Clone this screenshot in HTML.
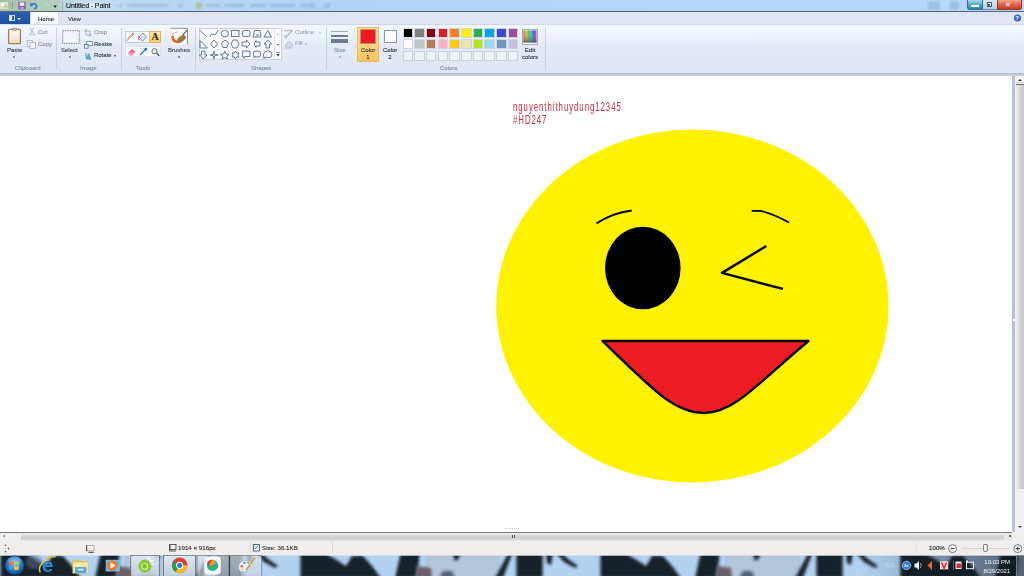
<!DOCTYPE html>
<html><head><meta charset="utf-8">
<style>
*{margin:0;padding:0;box-sizing:border-box}
html,body{width:1024px;height:576px;overflow:hidden;background:#fff;font-family:"Liberation Sans",sans-serif}
.a{position:absolute}
#title{left:0;top:0;width:1024px;height:11px;background:linear-gradient(90deg,#a6c2a4 0,#b4cfc0 55px,#bcd8f2 120px,#b0d4f6 300px,#b4d8fa 700px,#b4d8fa 1024px)}
#titleline{left:0;top:10.8px;width:1024px;height:1.2px;background:#56667c}
#tabs{left:0;top:12px;width:1024px;height:12px;background:#dfe6f2}
#file{left:0;top:12px;width:30px;height:12px;background:linear-gradient(#2c5fb0,#1e4f9e)}
#home{left:30px;top:12px;width:28.5px;height:13px;background:linear-gradient(#fdfeff,#f4f8fd);border-left:1px solid #c4dcf0;border-right:1px solid #d4dee8}
#view{left:59px;top:12.5px;width:34px;height:11.5px;background:#e4e9f3;border:1px solid #eef2f8;border-bottom:none}
#ribbon{left:0;top:24px;width:1024px;height:49px;background:linear-gradient(#f2f8ff 0,#eef4fc 8px,#e3eaf5 22px,#dfe6f2 49px);border-top:1px solid #cfd8e4}
#ribbonbot{left:0;top:72.5px;width:1024px;height:3.2px;background:linear-gradient(#b4c0d0 0,#b8c4d4 40%,#c6cedb 55%,#ccd4e0 100%)}
.t{position:absolute;font-size:6px;line-height:7px;color:#2a3a50;white-space:nowrap;will-change:transform;-webkit-text-stroke:0.12px currentColor}
.g{color:#8090a4}
.sep{position:absolute;top:28px;width:1px;height:42px;background:#c7d3e2}
#canvas{left:0;top:76px;width:1012px;height:456px;background:#fff}
#vstrip{left:1012px;top:76px;width:3px;height:456px;background:#b4c4d6}
#vscroll{left:1015px;top:76px;width:9px;height:464px;background:#f0f0f0}
#hscroll{left:0;top:532px;width:1012px;height:8px;background:#e6e6e6;border-top:1px solid #7c7c7c}
#status{left:0;top:540px;width:1024px;height:15px;background:#f0eeec}
#taskbar{left:0;top:555px;width:1024px;height:21px;background:#a9c9ea;overflow:hidden}
</style></head><body>
<div id="title" class="a"></div>
<div id="titleline" class="a"></div><svg class="a" style="left:0;top:0" width="1024" height="11" viewBox="0 0 1024 11"><defs><filter id="tb" x="-10%" y="-100%" width="120%" height="300%"><feGaussianBlur stdDeviation="1.1"/></filter></defs>
<g filter="url(#tb)" fill="#5a7088" opacity="0.22">
<rect x="112" y="4" width="10" height="3"/><rect x="128" y="4" width="40" height="3"/><rect x="178" y="4" width="5" height="3"/>
<rect x="206" y="4" width="14" height="3"/><rect x="224" y="4" width="20" height="3"/><rect x="250" y="4" width="16" height="3"/><rect x="270" y="4" width="25" height="3"/><rect x="300" y="4" width="15" height="3"/>
<rect x="309" y="3" width="6" height="5"/><rect x="324" y="3" width="6" height="5"/>
<rect x="928" y="1" width="12" height="9"/><rect x="950" y="1" width="9" height="9"/>
</g>
<g filter="url(#tb)"><rect x="196" y="2.5" width="6" height="6" fill="#a8b870" opacity="0.7"/></g>
</svg>
<svg class="a" style="left:0;top:0" width="60" height="11" viewBox="0 0 60 11">
<rect x="0" y="2" width="8" height="7" fill="#e8f0e0" opacity="0.7"/><rect x="1" y="3" width="3" height="3" fill="#f8f8f0"/><rect x="4.5" y="5" width="3" height="3" fill="#d8c890"/>
<rect x="12" y="2" width="0.8" height="7" fill="#8a9aa0"/>
<rect x="18.2" y="1.8" width="7.6" height="7.6" fill="#8a64b8"/><rect x="19.8" y="2.5" width="4.4" height="3.3" fill="#f4eef8"/><rect x="20.5" y="7" width="3" height="2" fill="#b8a0d0"/>
<path d="M31,4.5 Q35,2.5 36.5,5.5 Q37,8.5 34,8.8" stroke="#2a78c8" stroke-width="1.6" fill="none"/><path d="M30,3 L30.5,6.8 L33.5,5 Z" fill="#2a78c8"/>
<path d="M48.5,5 Q45,2.5 42.5,5.5" stroke="#c4d2cc" stroke-width="1.4" fill="none"/><path d="M49.5,3.5 L49,6.5 L46.5,5.5 Z" fill="#c4d2cc"/>
<path d="M53.2,5.6 L56.8,5.6 L55,7.9 Z" fill="#1a2430"/>
</svg>
<div class="a" style="left:967px;top:0;width:16px;height:10px;border-radius:0 0 0 3px;background:linear-gradient(#a8d8f0,#4aa0c8 60%,#2a88b8);border:1px solid #3a6a8a;border-top:none"></div>
<div class="a" style="left:971px;top:5px;width:8px;height:1.8px;background:#fff"></div>
<div class="a" style="left:983px;top:0;width:14px;height:10px;background:linear-gradient(#d8e8f4,#b8d0e4);border-bottom:1px solid #6a8aa4"></div>
<div class="a" style="left:986.5px;top:2px;width:5px;height:5px;border:1px solid #4a5a6a;background:#f0f4f8"></div>
<div class="a" style="left:988px;top:3.5px;width:2px;height:2px;background:#4a5a6a"></div>
<div class="a" style="left:997px;top:0;width:25px;height:10px;border-radius:0 0 3px 0;background:linear-gradient(#f4a890,#e06048 50%,#c83a24);border:1px solid #8a3a2a;border-top:none"></div>
<div class="a" style="left:1005.5px;top:1px;font-size:8px;line-height:8px;font-weight:bold;color:#fff">×</div>

<div class="a" style="left:60px;top:0;width:60px;height:11px;background:radial-gradient(ellipse at center,rgba(230,242,252,0.9) 0,rgba(200,225,248,0.5) 60%,rgba(180,210,240,0) 100%)"></div><div class="a" style="left:62px;top:2px;width:1px;height:8px;background:#9aacbf"></div><div class="t" style="left:66px;top:1.5px;font-size:7px;line-height:8px;color:#10151c;-webkit-text-stroke:0.15px #10151c;letter-spacing:-0.1px">Untitled - Paint</div>
<div id="tabs" class="a"></div>
<div id="file" class="a"></div>
<div class="a" style="left:9px;top:15px;width:6px;height:6px;background:#fff;border:1px solid #c8d8f0"></div><div class="a" style="left:12px;top:16px;width:1.5px;height:4px;background:#2a5aa0"></div><div class="a" style="left:17px;top:17.5px;border-left:2.5px solid transparent;border-right:2.5px solid transparent;border-top:2.5px solid #fff"></div>
<svg class="a" style="left:1013px;top:14px" width="9" height="8" viewBox="0 0 9 8"><circle cx="4.5" cy="4" r="3.6" fill="#3a6ac8"/><text x="2.6" y="6.2" font-family="Liberation Sans" font-size="5.5" font-weight="bold" fill="#fff">?</text></svg><div id="home" class="a"></div>
<div class="t" style="left:37.7px;top:15.8px;color:#1e2632">Home</div>
<div class="t" style="left:68.4px;top:15.8px;color:#2a3440">View</div>
<div id="ribbon" class="a"></div>
<div id="ribbonbot" class="a"></div>

<!-- clipboard -->
<svg class="a" style="left:7px;top:27px" width="16" height="19" viewBox="0 0 16 19">
<defs><linearGradient id="pg" x1="0" y1="0" x2="0" y2="1"><stop offset="0" stop-color="#fdfbf8"/><stop offset="0.6" stop-color="#f4ece0"/><stop offset="1" stop-color="#e6d8c4"/></linearGradient></defs>
<rect x="1.6" y="2.4" width="11.8" height="14.2" rx="0.8" fill="url(#pg)" stroke="#a4804c" stroke-width="1.3"/>
<rect x="5.6" y="1" width="3.8" height="2.6" rx="0.5" fill="#c4bcb0" stroke="#8a7e70" stroke-width="0.5"/>
</svg>
<div class="t" style="left:7px;top:47px;color:#3c4652">Paste</div>
<div class="a" style="left:13px;top:56px;width:2px;height:2px;background:#8090a0"></div>
<svg class="a" style="left:28.5px;top:28.3px" width="6" height="8" viewBox="0 0 6 8"><path d="M1.2,0 L4.2,5.2 M4.8,0 L1.8,5.2" stroke="#a8b0ba" stroke-width="0.9"/><circle cx="1.4" cy="6.4" r="1.1" fill="#b8c0c8"/><circle cx="4.6" cy="6.4" r="1.1" fill="#b8c0c8"/></svg>
<div class="t g" style="left:38px;top:29px">Cut</div>
<svg class="a" style="left:27px;top:40px" width="9" height="9" viewBox="0 0 9 9"><rect x="0.5" y="0.5" width="5" height="6" fill="#f2f4f7" stroke="#aab2bc" stroke-width="0.8"/><rect x="3" y="2.5" width="5.5" height="6" fill="#f2f4f7" stroke="#aab2bc" stroke-width="0.8"/></svg>
<div class="t g" style="left:38px;top:41px">Copy</div>
<div class="t g" style="left:15px;top:65.2px">Clipboard</div>
<div class="sep" style="left:56px"></div>
<!-- image -->
<svg class="a" style="left:61.5px;top:29.5px" width="18" height="14" viewBox="0 0 18 14"><rect x="0.7" y="0.7" width="16.6" height="12.6" fill="#f0f4f9" stroke="#6a7480" stroke-width="0.9" stroke-dasharray="1.4,1"/></svg>
<div class="t" style="left:61px;top:47px;color:#3c4652">Select</div>
<div class="a" style="left:69px;top:56px;width:2px;height:2px;background:#8090a0"></div>
<svg class="a" style="left:84px;top:29px" width="8" height="8" viewBox="0 0 8 8"><path d="M2,0 V6 H8 M0,2 H6 V8" stroke="#a0a8b4" stroke-width="0.9" fill="none"/></svg>
<div class="t g" style="left:94px;top:29px">Crop</div>
<svg class="a" style="left:83.5px;top:40.5px" width="9" height="8" viewBox="0 0 9 8"><rect x="2.8" y="0.5" width="5.6" height="4.2" fill="#fff" stroke="#3a6cb0" stroke-width="0.7"/><rect x="0.5" y="3.6" width="3.6" height="3.6" fill="#e8f0fa" stroke="#3a6cb0" stroke-width="0.7"/></svg>
<div class="t" style="left:94px;top:41px;color:#2c3a4c">Resize</div>
<svg class="a" style="left:84px;top:52px" width="8" height="8" viewBox="0 0 8 8"><path d="M1,1 L5,1 L7.5,7.5 L2,7.5 Z" fill="#5aa0c8"/><path d="M1,1 L5,1 L3,5 Z" fill="#a8d0e8"/></svg>
<div class="t" style="left:94px;top:52px;color:#2c3a4c">Rotate</div>
<div class="a" style="left:113.5px;top:55px;border-left:1.5px solid transparent;border-right:1.5px solid transparent;border-top:2px solid #505a66"></div>
<div class="t g" style="left:80px;top:65.2px">Image</div>
<div class="sep" style="left:121px"></div>
<!-- tools -->
<div class="a" style="left:124.5px;top:31px;width:36px;height:12px;border:1px solid #c3ccd8;background:#f4f7fb"></div>
<div class="a" style="left:124.5px;top:46px;width:36px;height:11px;border:1px solid #dde4ee;background:#f4f7fb"></div>
<div class="a" style="left:149px;top:31px;width:11.5px;height:12px;border:1px solid #e4b458;background:linear-gradient(#fce7a8,#f7c966)"></div>
<svg class="a" style="left:126px;top:32px" width="9" height="10" viewBox="0 0 9 10"><path d="M1,9 L2,6 L7,1 L8,2 L3,7 Z" fill="#e8b878" stroke="#c89050" stroke-width="0.5"/><path d="M6,2 L7,1 L8,2 L7,3 Z" fill="#707880"/></svg>
<svg class="a" style="left:138px;top:32px" width="9" height="10" viewBox="0 0 9 10"><path d="M1,5 L5,1 L8.5,5 L4.5,9 Z" fill="#d8e6f2" stroke="#6c8cb0" stroke-width="0.9"/><path d="M0.5,4 Q0,7 1.5,8" stroke="#e07880" stroke-width="1.2" fill="none"/></svg>
<div class="a" style="left:151.5px;top:30.5px;font-family:'Liberation Serif',serif;font-weight:bold;font-size:10px;line-height:12px;color:#1a1a1a">A</div>
<svg class="a" style="left:127px;top:48px" width="9" height="8" viewBox="0 0 9 8"><path d="M0.5,5.5 L5,1 L8.5,3.5 L4,8 Z" fill="#e8707a"/><path d="M0.5,5.5 L2.5,3.5 L6,6 L4,8 Z" fill="#f4a0a8"/></svg>
<svg class="a" style="left:139px;top:47px" width="9" height="9" viewBox="0 0 9 9"><path d="M1,8 L6,3" stroke="#3070b8" stroke-width="1.2"/><path d="M5,2 L7,0.5 L8.5,2 L7,4 Z" fill="#2060a8"/></svg>
<svg class="a" style="left:151px;top:48px" width="9" height="8" viewBox="0 0 9 8"><circle cx="3.5" cy="3.2" r="2.6" fill="#e8f0f8" stroke="#5a6878" stroke-width="0.9"/><path d="M5.5,5.2 L8.3,7.8" stroke="#404850" stroke-width="1.4"/></svg>
<div class="t g" style="left:136px;top:65.2px">Tools</div>
<div class="sep" style="left:165px;background:#dfe6ef"></div>
<!-- brushes -->
<svg class="a" style="left:169px;top:27px" width="21" height="20" viewBox="169 27 21 20">
<rect x="170.5" y="28.3" width="17" height="16.8" fill="#fbfcfe"/>
<path d="M170.5,28.3 H187.5 V45" stroke="#8a929c" stroke-width="1" fill="none"/>
<path d="M170.5,45 H187.5 M170.5,28.3 V45" stroke="#dfe4ea" stroke-width="0.7" fill="none"/>
<path d="M171.5,36 Q171,41 174.5,42.6 Q178,44 181.5,42 L181,40 Q177,41.5 175,39.5 Q173.5,38 174,35.5 Z" fill="#e8602a"/>
<path d="M171.8,35 Q174,32.5 177.5,32" stroke="#e07040" stroke-width="1" fill="none" stroke-dasharray="1.2,0.6"/>
<ellipse cx="181.5" cy="38.8" rx="4.8" ry="2.8" transform="rotate(-38 181.5 38.8)" fill="#9a7a38"/>
<path d="M182.8,35.2 L187,30.2" stroke="#4a5a80" stroke-width="1.1"/>
</svg>
<div class="t" style="left:168px;top:47px;color:#3c4652">Brushes</div>
<div class="a" style="left:178px;top:56px;width:2px;height:2px;background:#8090a0"></div>
<div class="sep" style="left:194.5px"></div>
<!-- shapes -->
<div class="a" style="left:198.5px;top:28px;width:83px;height:32px;border:1px solid #c8d0dc;background:#f7f9fc"></div>
<div class="a" style="left:273.5px;top:29px;width:1px;height:30px;background:#e2e7ee"></div>
<svg class="a" style="left:199px;top:29px" width="74" height="31" viewBox="0 0 74 31" fill="none" stroke="#42607e" stroke-width="0.8">
<path d="M0.5,1 L8,8"/>
<path d="M11,8 Q12,4 14,5 Q15,7 17,5 Q18,3 19,1"/>
<ellipse cx="25.8" cy="4.6" rx="3.8" ry="3.3" fill="#f0f6fb"/>
<rect x="32.5" y="1.5" width="7.5" height="6" fill="#f0f6fb"/>
<rect x="43.5" y="1.5" width="7.5" height="6" rx="1.5" fill="#f0f6fb"/>
<path d="M54,8 L55.5,1.5 L61,1.5 L62,8 Z M57,6 L60,6" fill="#f0f6fb"/>
<path d="M65,8 L68.8,1.5 L72.5,8 Z" fill="#f0f6fb"/>
<path d="M1,11.5 L1,19 L8.5,19 Z" fill="#f0f6fb"/>
<path d="M15,11 L18.5,15 L15,19 L11.5,15 Z" fill="#f0f6fb"/>
<path d="M26,11 L29.5,14 L28,18.5 L24,18.5 L22.5,14 Z" fill="#f0f6fb"/>
<path d="M34,11 L38,11 L40,15 L38,19 L34,19 L32,15 Z" fill="#f0f6fb"/>
<path d="M43,13 L47.5,13 L47.5,11 L51,15 L47.5,19 L47.5,17 L43,17 Z" fill="#f0f6fb"/>
<path d="M55,15 L57,11.5 L57,13 L61,13 L61,17 L57,17 L57,18.5 Z" fill="#f0f6fb"/>
<path d="M68.8,11 L72.5,15 L70.5,15 L70.5,19 L67,19 L67,15 L65,15 Z" fill="#f0f6fb"/>
<path d="M2.5,22 L6,22 L6,26 L8,26 L4.2,30 L0.5,26 L2.5,26 Z" fill="#f0f6fb"/>
<path d="M15,22 L15.7,25.3 L19,26 L15.7,26.7 L15,30 L14.3,26.7 L11,26 L14.3,25.3 Z" fill="#f0f6fb"/>
<path d="M25.8,22 L27,25 L30,25.3 L27.8,27.3 L28.5,30 L25.8,28.5 L23,30 L23.8,27.3 L21.5,25.3 L24.6,25 Z" fill="#f0f6fb"/>
<path d="M36.5,22 L37.8,24 L40,24 L39,26 L40,28 L37.8,28 L36.5,30 L35.2,28 L33,28 L34,26 L33,24 L35.2,24 Z" fill="#f0f6fb"/>
<path d="M43.5,22 L51,22 L51,27.5 L46,27.5 L45,29.5 L44.5,27.5 L43.5,27.5 Z" fill="#f0f6fb"/>
<path d="M55,22.5 Q58,21.5 61,22.5 Q62.5,25 61,27.5 Q58,28.5 56,27.5 L55,29 L55,27 Q53.5,25 55,22.5 Z" fill="#f0f6fb"/>
<path d="M65.5,23 Q68.8,20.5 72,23 Q74,25.5 72,28 Q68.8,29.5 66,28 L65,29.5 Q63.5,25.5 65.5,23 Z" fill="#f0f6fb"/>
</svg>
<svg class="a" style="left:275px;top:30px" width="6" height="29" viewBox="0 0 6 29"><path d="M1.5,5 L4.5,5 L3,3.5 Z" fill="#b8c0cc"/><path d="M1.5,14 L4.5,14 L3,15.5 Z" fill="#606a78"/><path d="M1,24 L5,24 L3,26.5 Z" fill="#404a58"/><path d="M1,22.5 L5,22.5" stroke="#404a58" stroke-width="0.6"/></svg>
<svg class="a" style="left:284px;top:29px" width="10" height="10" viewBox="0 0 10 10"><path d="M1,9 L8,2" stroke="#b0b8c4" stroke-width="1.4"/><path d="M0.5,1.5 L9,1.5" stroke="#b0b8c4" stroke-width="1.2"/><path d="M1,6 L1,9" stroke="#b0b8c4" stroke-width="1"/></svg>
<div class="t g" style="left:295px;top:29px;color:#9aa6b4">Outline</div>
<div class="a" style="left:318.5px;top:31.5px;border-left:1.5px solid transparent;border-right:1.5px solid transparent;border-top:2px solid #a8b2be"></div>
<svg class="a" style="left:284px;top:39px" width="10" height="10" viewBox="0 0 10 10"><path d="M1,7 L5,2 L9,6 L5,9 Z" fill="#d0d8e2" stroke="#b0b8c4" stroke-width="0.8"/><path d="M1,9 L9,9" stroke="#c4ccd6" stroke-width="1.2"/></svg>
<div class="t g" style="left:295px;top:40px;color:#9aa6b4">Fill</div>
<div class="a" style="left:305px;top:43px;border-left:1.5px solid transparent;border-right:1.5px solid transparent;border-top:2px solid #a8b2be"></div>
<div class="t g" style="left:251px;top:65.2px">Shapes</div>
<div class="sep" style="left:325.5px"></div>
<!-- size -->
<div class="a" style="left:331px;top:31px;width:17px;height:1.3px;background:#a4acbc"></div>
<div class="a" style="left:331px;top:35px;width:17px;height:2px;background:#6a7898"></div>
<div class="a" style="left:331px;top:39.2px;width:17px;height:3.5px;background:#6c7a96"></div>
<div class="t g" style="left:334px;top:47px">Size</div>
<div class="a" style="left:338.5px;top:56px;width:2px;height:2px;background:#b0bac6"></div>
<div class="sep" style="left:354px;background:#e2e8f0"></div>
<!-- colors -->
<div class="a" style="left:357px;top:26.5px;width:22px;height:35px;border:1px solid #e8b860;background:linear-gradient(#fde6a6,#fbc460)"></div>
<div class="a" style="left:360px;top:28.5px;width:16px;height:15px;background:#ed1c24;border:1px solid #c88a6a"></div>
<div class="t" style="left:361px;top:47px;color:#2a3440;text-align:center;width:14px;line-height:6.5px">Color<br>1</div>
<div class="a" style="left:384px;top:30px;width:13px;height:13px;background:#fff;border:1px solid #8a96a4"></div>
<div class="t" style="left:383px;top:47px;color:#2a3440;text-align:center;width:14px;line-height:6.5px">Color<br>2</div>
<div id="pal" class="a" style="left:402px;top:27px;width:118px;height:35px"><div class="a" style="left:0.5px;top:0.5px;width:10.5px;height:10px;border:1px solid #d0d6de;background:#000000"></div><div class="a" style="left:12.2px;top:0.5px;width:10.5px;height:10px;border:1px solid #d0d6de;background:#7f7f7f"></div><div class="a" style="left:23.9px;top:0.5px;width:10.5px;height:10px;border:1px solid #d0d6de;background:#880015"></div><div class="a" style="left:35.6px;top:0.5px;width:10.5px;height:10px;border:1px solid #d0d6de;background:#ed1c24"></div><div class="a" style="left:47.3px;top:0.5px;width:10.5px;height:10px;border:1px solid #d0d6de;background:#ff7f27"></div><div class="a" style="left:59.0px;top:0.5px;width:10.5px;height:10px;border:1px solid #d0d6de;background:#fff200"></div><div class="a" style="left:70.7px;top:0.5px;width:10.5px;height:10px;border:1px solid #d0d6de;background:#22b14c"></div><div class="a" style="left:82.4px;top:0.5px;width:10.5px;height:10px;border:1px solid #d0d6de;background:#00a2e8"></div><div class="a" style="left:94.1px;top:0.5px;width:10.5px;height:10px;border:1px solid #d0d6de;background:#3f48cc"></div><div class="a" style="left:105.8px;top:0.5px;width:10.5px;height:10px;border:1px solid #d0d6de;background:#a349a4"></div><div class="a" style="left:0.5px;top:12.1px;width:10.5px;height:10px;border:1px solid #d0d6de;background:#ffffff"></div><div class="a" style="left:12.2px;top:12.1px;width:10.5px;height:10px;border:1px solid #d0d6de;background:#c3c3c3"></div><div class="a" style="left:23.9px;top:12.1px;width:10.5px;height:10px;border:1px solid #d0d6de;background:#b97a57"></div><div class="a" style="left:35.6px;top:12.1px;width:10.5px;height:10px;border:1px solid #d0d6de;background:#ffaec9"></div><div class="a" style="left:47.3px;top:12.1px;width:10.5px;height:10px;border:1px solid #d0d6de;background:#ffc90e"></div><div class="a" style="left:59.0px;top:12.1px;width:10.5px;height:10px;border:1px solid #d0d6de;background:#efe4b0"></div><div class="a" style="left:70.7px;top:12.1px;width:10.5px;height:10px;border:1px solid #d0d6de;background:#b5e61d"></div><div class="a" style="left:82.4px;top:12.1px;width:10.5px;height:10px;border:1px solid #d0d6de;background:#99d9ea"></div><div class="a" style="left:94.1px;top:12.1px;width:10.5px;height:10px;border:1px solid #d0d6de;background:#7092be"></div><div class="a" style="left:105.8px;top:12.1px;width:10.5px;height:10px;border:1px solid #d0d6de;background:#c8bfe7"></div><div class="a" style="left:0.5px;top:23.7px;width:10.5px;height:10px;border:1px solid #c8d0dc;background:#eef2f7"></div><div class="a" style="left:12.2px;top:23.7px;width:10.5px;height:10px;border:1px solid #c8d0dc;background:#eef2f7"></div><div class="a" style="left:23.9px;top:23.7px;width:10.5px;height:10px;border:1px solid #c8d0dc;background:#eef2f7"></div><div class="a" style="left:35.6px;top:23.7px;width:10.5px;height:10px;border:1px solid #c8d0dc;background:#eef2f7"></div><div class="a" style="left:47.3px;top:23.7px;width:10.5px;height:10px;border:1px solid #c8d0dc;background:#eef2f7"></div><div class="a" style="left:59.0px;top:23.7px;width:10.5px;height:10px;border:1px solid #c8d0dc;background:#eef2f7"></div><div class="a" style="left:70.7px;top:23.7px;width:10.5px;height:10px;border:1px solid #c8d0dc;background:#eef2f7"></div><div class="a" style="left:82.4px;top:23.7px;width:10.5px;height:10px;border:1px solid #c8d0dc;background:#eef2f7"></div><div class="a" style="left:94.1px;top:23.7px;width:10.5px;height:10px;border:1px solid #c8d0dc;background:#eef2f7"></div><div class="a" style="left:105.8px;top:23.7px;width:10.5px;height:10px;border:1px solid #c8d0dc;background:#eef2f7"></div></div>
<svg class="a" style="left:522px;top:29px" width="16" height="16" viewBox="0 0 16 16">
<defs><linearGradient id="rb" x1="0" y1="0" x2="1" y2="0"><stop offset="0" stop-color="#e03020"/><stop offset="0.2" stop-color="#e8d020"/><stop offset="0.4" stop-color="#30c040"/><stop offset="0.6" stop-color="#20c0d0"/><stop offset="0.8" stop-color="#3040d0"/><stop offset="1" stop-color="#d030c0"/></linearGradient>
<linearGradient id="rbv" x1="0" y1="0" x2="0" y2="1"><stop offset="0" stop-color="#fff" stop-opacity="0"/><stop offset="1" stop-color="#505050" stop-opacity="0.8"/></linearGradient></defs>
<rect x="0.5" y="0.5" width="15" height="15" fill="#fff" stroke="#a0a8b4" stroke-width="1"/>
<rect x="1.5" y="1.5" width="13" height="12" fill="url(#rb)"/>
<rect x="1.5" y="1.5" width="13" height="12" fill="url(#rbv)"/>
</svg>
<div class="t" style="left:520px;top:47px;color:#2a3440;text-align:center;width:20px;line-height:6.5px">Edit<br>colors</div>
<div class="t g" style="left:440px;top:65.2px">Colors</div>
<div class="sep" style="left:544.5px"></div>
<div id="canvas" class="a"></div>
<svg class="a" style="left:0;top:0" width="1024" height="576" viewBox="0 0 1024 576">
<ellipse cx="692.4" cy="306" rx="196.1" ry="176.5" fill="#fff200"/>
<ellipse cx="642.8" cy="268" rx="37.8" ry="41.3" fill="#000"/>
<path d="M596.5,223.5 Q612,213 631.7,210.5" stroke="#000" stroke-width="1.8" fill="none"/>
<path d="M751.7,210.8 L761,210.8 Q776,215 789,222.6" stroke="#000" stroke-width="1.8" fill="none"/>
<path d="M766.4,246 L722,272.9 L782.9,288.9" stroke="#000" stroke-width="2.4" fill="none" stroke-linejoin="round"/>
<path d="M602.5,341 L808.5,341 C760,381 735,413 704,413 C675,413 655,392 602.5,341 Z" fill="#ed1c24" stroke="#000" stroke-width="2.4" stroke-linejoin="round"/>
</svg>
<div class="a" style="left:513px;top:100px;font-size:13px;line-height:13px;color:#d02a3c;transform-origin:0 0;transform:scaleX(0.6);letter-spacing:1.6px;white-space:nowrap">nguyenthithuydung12345<br>#HD247</div>
<div id="vstrip" class="a"></div>
<div id="vscroll" class="a"></div>
<div id="hscroll" class="a"></div>
<div id="status" class="a"></div><div class="a" style="left:1012px;top:532px;width:12px;height:9px;background:#efefef"></div>

<div class="a" style="left:0;top:533px;width:21px;height:8px;background:#efefef"></div>
<div class="a" style="left:21px;top:533px;width:983px;height:8px;background:linear-gradient(#f0f0f0 0,#dcdcdc 30%,#cdcdcd 60%,#e4e4e4 100%)"></div>
<div class="a" style="left:3px;top:535px;border-top:1.5px solid transparent;border-bottom:1.5px solid transparent;border-right:2px solid #555"></div>
<div class="a" style="left:1009px;top:535px;width:2px;height:2px;background:#666"></div><div class="a" style="left:1017.5px;top:284px;width:4px;height:0.8px;background:#555"></div><div class="a" style="left:1017.5px;top:286.2px;width:4px;height:0.8px;background:#777"></div><div class="a" style="left:1012.5px;top:319px;width:2px;height:2px;background:#fff"></div><div class="a" style="left:511.5px;top:534.5px;width:1px;height:3.5px;background:#555"></div><div class="a" style="left:513.5px;top:534.5px;width:1px;height:3.5px;background:#555"></div><div class="a" style="left:505px;top:528px;width:14px;height:1px;border-top:1px dotted #c8c8c8"></div>
<div class="a" style="left:1015px;top:76px;width:9px;height:7px;background:#f4f4f4;border-bottom:1px solid #cfcfcf"></div>
<div class="a" style="left:1017.5px;top:78.5px;border-left:2px solid transparent;border-right:2px solid transparent;border-bottom:2px solid #333"></div>
<div class="a" style="left:1016px;top:83.5px;width:8px;height:405.5px;background:linear-gradient(90deg,#ececec,#d0d0d0 60%,#c8c8c8);border-top:1px solid #6a6a6a"></div>
<div class="a" style="left:1017.5px;top:526px;border-left:2px solid transparent;border-right:2px solid transparent;border-top:2px solid #444"></div>
<svg class="a" style="left:1.5px;top:544px" width="8" height="9" viewBox="0 0 8 9"><path d="M3.5,1.5 V7.5 M0.5,4.5 H6.5" stroke="#b0b0b0" stroke-width="0.6" stroke-dasharray="0.8,0.8"/><path d="M2.7,1.2 H4.3 M2.7,7.8 H4.3 M6.6,3.7 V5.3" stroke="#303030" stroke-width="0.9"/></svg>
<svg class="a" style="left:85.5px;top:544.5px" width="9" height="8" viewBox="0 0 9 8"><path d="M0.5,0.5 H8 V5.8 H0.5 Z" fill="none" stroke="#444" stroke-width="0.7" stroke-dasharray="1,0.9"/><path d="M0.6,0.5 V5.8" stroke="#222" stroke-width="0.9"/><path d="M2.5,7.3 H7.5" stroke="#222" stroke-width="0.9"/></svg>
<svg class="a" style="left:169px;top:544px" width="8" height="8" viewBox="0 0 8 8"><rect x="1" y="0.5" width="6" height="5" fill="none" stroke="#333" stroke-width="0.8"/><path d="M0.5,0.5 V7 H7" stroke="#333" stroke-width="0.8" fill="none"/></svg>
<div class="t" style="left:178px;top:544px;color:#2a2a2a;font-size:6.2px">1914 × 916px</div>
<div class="a" style="left:249.5px;top:542px;width:1px;height:11px;background:#dcdad6"></div>
<svg class="a" style="left:253px;top:544px" width="8" height="8" viewBox="0 0 8 8"><rect x="0.5" y="0.5" width="6" height="6.5" fill="none" stroke="#2a4a70" stroke-width="0.8"/><path d="M2,5 L5,2" stroke="#2a4a70" stroke-width="0.8"/></svg>
<div class="t" style="left:262px;top:544px;color:#2a2a2a;font-size:6.2px">Size: 36.1KB</div>
<div class="a" style="left:331.5px;top:542px;width:1px;height:11px;background:#dcdad6"></div>
<div class="a" style="left:915.5px;top:542px;width:1px;height:11px;background:#e4e2de"></div>
<div class="t" style="left:929px;top:544px;color:#2a2a2a;font-size:6.2px">100%</div>
<svg class="a" style="left:948px;top:543.5px" width="10" height="10" viewBox="0 0 10 10"><circle cx="4.6" cy="4.6" r="4" fill="#f8f8f8" stroke="#555" stroke-width="0.8"/><path d="M2.6,4.6 H6.6" stroke="#333" stroke-width="1"/></svg>
<div class="a" style="left:962px;top:547.5px;width:47px;height:1px;background:#d4d2ce"></div>
<div class="a" style="left:982.5px;top:543.5px;width:5px;height:8px;background:linear-gradient(90deg,#fafafa,#d8d8d8);border:1px solid #8a8a8a;border-radius:1px 1px 2px 2px"></div>
<svg class="a" style="left:1012.5px;top:543.5px" width="10" height="10" viewBox="0 0 10 10"><circle cx="4.8" cy="4.6" r="4" fill="#f8f8f8" stroke="#555" stroke-width="0.8"/><path d="M2.8,4.6 H6.8 M4.8,2.6 V6.6" stroke="#333" stroke-width="1"/></svg>
<div id="taskbar" class="a"><svg class="a" style="left:0;top:0" width="1024" height="21" viewBox="0 555 1024 21">
<defs>
<filter id="bl" x="-20%" y="-100%" width="140%" height="300%"><feGaussianBlur stdDeviation="1.7"/></filter>
<radialGradient id="orb" cx="0.5" cy="0.4" r="0.6"><stop offset="0" stop-color="#7ad0f8"/><stop offset="0.55" stop-color="#2a80c8"/><stop offset="1" stop-color="#0a3870"/></radialGradient>
<linearGradient id="btn" x1="0" y1="0" x2="0" y2="1"><stop offset="0" stop-color="#e4ecf4"/><stop offset="1" stop-color="#c4d0dc"/></linearGradient>
<linearGradient id="tray" x1="0" y1="0" x2="1" y2="0"><stop offset="0" stop-color="#101820" stop-opacity="0"/><stop offset="1" stop-color="#101820" stop-opacity="0.55"/></linearGradient>
<g id="wp">
<path d="M0.4,553 L25,553 L36,559.5 L46,566 L52.3,555.5 L62.6,555.5 L72,566 L81,578 L0.4,578 Z"/>
<path d="M100.7,553 L119.7,553 L117,578 L95,578 Z"/>
<path d="M153.4,553 L160.7,553 L158,560 L154,560 Z"/>
<path d="M139,578 L143,571 L152,571 L155,578 Z" opacity="0.6"/>
<path d="M208.5,553 L212.5,553 L203,578 L195,578 Z"/>
<path d="M216.4,553 L242.7,553 L242.7,578 L216.4,578 Z"/>
<path d="M246,553 L253,553 L251,565 L247,563 Z"/>
<path d="M256,553 L262,553 L268,559 L278,566 L275,568 L264,562 Z"/>
</g>
</defs>
<rect x="0" y="555" width="1024" height="21" fill="#b2d2f2"/>
<rect x="125" y="555" width="75" height="21" fill="#b2c6da"/>
<rect x="425" y="555" width="75" height="21" fill="#b2c6da"/>
<rect x="725" y="555" width="75" height="21" fill="#b2c6da"/>
<g filter="url(#bl)" fill="#18202c">
<use href="#wp"/>
<use href="#wp" transform="translate(300,0)"/>
<use href="#wp" transform="translate(600,0)"/>
<use href="#wp" transform="translate(900,0)"/>
</g>
<g filter="url(#bl)" fill="#6a5e66">
<path d="M117,566 L131,568 L132,578 L115,578 Z"/>
<path d="M417,566 L431,568 L432,578 L415,578 Z"/>
<path d="M717,566 L731,568 L732,578 L715,578 Z"/>
</g>
<rect x="860" y="555" width="164" height="21" fill="url(#tray)"/>
<rect x="900" y="555" width="116" height="21" fill="#101820" opacity="0.12"/>
<rect x="0" y="555" width="1024" height="0.8" fill="#dfe6ee" opacity="0.9"/>
<!-- start orb -->
<circle cx="14.5" cy="565.6" r="9.8" fill="url(#orb)" stroke="#0a2a50" stroke-width="0.5"/>
<path d="M9.6,561.3 Q11.6,560.3 14,561.3 L13.6,565 Q11.2,564 9.1,565 Z" fill="#f05a28"/>
<path d="M14.8,561.5 Q17.2,562.3 19.5,561.4 L19,565.1 Q16.7,565.9 14.4,565.1 Z" fill="#90c838"/>
<path d="M9.1,565.8 Q11.2,565 13.5,565.9 L13.1,569.6 Q11,568.8 8.6,569.7 Z" fill="#30a8f0"/>
<path d="M14.3,566 Q16.6,566.8 18.9,566 L18.4,569.7 Q16.2,570.4 13.9,569.7 Z" fill="#f8c030"/>
<ellipse cx="14.5" cy="560.5" rx="7" ry="4" fill="#fff" opacity="0.2"/>
<!-- IE -->
<g filter="url(#bl)"><ellipse cx="34" cy="562" rx="8" ry="7" fill="#5a6c88" opacity="0.55"/></g>
<text x="41.8" y="571.8" font-family="Liberation Sans" font-size="21" font-weight="bold" fill="#2a86d6">e</text>
<path d="M40.5,572.5 Q37,568 44.5,560.5 Q51.5,555 55.5,557" stroke="#e8c238" stroke-width="1.5" fill="none"/>
<!-- folder -->
<path d="M72.5,559.5 L78,559.5 L79.5,561 L88.5,561 L88.5,573.5 L72.5,573.5 Z" fill="#e0c058"/>
<rect x="73.3" y="562.3" width="14.6" height="10.6" fill="#f8eaa8"/>
<rect x="75" y="567" width="11.5" height="6" fill="#4aa0d8" opacity="0.9"/>
<rect x="78" y="568.8" width="5.5" height="1.6" fill="#e8f4fa"/>
<!-- media player -->
<rect x="105.7" y="559.8" width="14.2" height="11.7" fill="#6ab8e4"/>
<circle cx="112.3" cy="565.5" r="5.2" fill="#f07828"/>
<path d="M110.5,562.3 L115.5,565.5 L110.5,568.7 Z" fill="#fff"/>
<!-- task buttons -->
<g stroke="#40505e" stroke-width="0.7">
<rect x="130.8" y="555.3" width="28.6" height="21" fill="url(#btn)" opacity="0.88"/>
<rect x="163.5" y="555.3" width="32" height="21" fill="url(#btn)" opacity="0.88"/>
<rect x="197" y="555.3" width="32" height="21" fill="url(#btn)" opacity="0.7"/>
<rect x="229.8" y="555.3" width="32" height="21" fill="url(#btn)" opacity="0.7"/>
</g>
<!-- coc coc -->
<circle cx="145" cy="566" r="6.5" fill="#88c830"/>
<circle cx="144.6" cy="566.4" r="3.5" fill="#d8f0a8"/>
<circle cx="144.6" cy="566.4" r="2.3" fill="#80c028"/>
<path d="M147.5,560.5 L150,557.5 M149.3,562.3 L153,560 M150.3,564.5 L153.6,563.8" stroke="#fff" stroke-width="1.1"/>
<!-- chrome -->
<circle cx="179.7" cy="565.3" r="7.8" fill="#d8402e"/>
<path d="M179.7,565.3 L172.95,561.4 A7.8,7.8 0 0 0 175.8,572.05 Z" fill="#2a9e4e"/>
<path d="M179.7,565.3 L175.8,572.05 A7.8,7.8 0 0 0 187.5,565.3 Z" fill="#f4c020"/>
<circle cx="179.7" cy="565.3" r="3.6" fill="#fff"/>
<circle cx="179.7" cy="565.3" r="2.6" fill="#3a7ad8"/>
<!-- paint3d-like -->
<rect x="204.3" y="556.8" width="16.5" height="17.5" rx="3" fill="#f6f6f6"/>
<circle cx="212.5" cy="565.4" r="5.6" fill="#18b0c8"/>
<path d="M207,564 Q208,559.3 212.8,559.8 Q210,562 209.6,566.5 Z" fill="#e0402a"/>
<path d="M209.6,566.5 Q210,562 212.8,559.8 Q215.5,560.5 216,563 Z" fill="#f0a020"/>
<path d="M207.6,568 Q212,572.5 217.5,567.5 L216.6,563.5 Q212,566.5 209.6,566.5 Z" fill="#30b060"/>
<!-- paint -->
<path d="M238.5,566.5 Q239,561 245.5,560.5 Q252,560.5 252.5,564 Q252.5,566.5 249.5,566.5 Q247.5,566.5 247.5,569 Q247.5,572 243.5,572 Q238.5,572 238.5,566.5 Z" fill="#eef0f6" stroke="#8898b0" stroke-width="0.5"/>
<circle cx="241.8" cy="566.2" r="1.2" fill="#e05030"/><circle cx="244.5" cy="563" r="1.2" fill="#30a0e0"/><circle cx="248.2" cy="562.6" r="1.2" fill="#50b040"/><circle cx="242.5" cy="569.5" r="1.1" fill="#f0c020"/>
<path d="M246,570 L255,557.5" stroke="#d89848" stroke-width="1.5"/>
<!-- tray -->
<text x="885.8" y="566.5" font-family="Liberation Sans" font-size="6" fill="#d0dae4">EN</text>
<circle cx="906.5" cy="565.4" r="4.2" fill="#2a78d8" stroke="#e8f0f8" stroke-width="0.6"/><text x="903.9" y="567.2" font-family="Liberation Sans" font-size="4" font-weight="bold" fill="#fff">Za</text>
<path d="M914.5,563.5 L916.5,563.5 L919,561 L919,570 L916.5,567.5 L914.5,567.5 Z" fill="#f0f0f0"/><path d="M920.5,563 Q922,565.5 920.5,568" stroke="#e0e0e0" stroke-width="0.7" fill="none"/>
<path d="M927.5,565.5 L932,561 L932,570 Z" fill="#f06a20"/>
<rect x="940" y="561.2" width="8.2" height="8.2" fill="#f4d4d4"/><path d="M941.6,562.5 L944.1,568.5 L946.6,562.5" stroke="#d82020" stroke-width="1.3" fill="none"/>
<rect x="953.3" y="560.5" width="0.6" height="10" fill="#8a949e"/>
<rect x="955.5" y="561.5" width="6" height="7.5" fill="#f0f0f0"/><rect x="956.5" y="563.5" width="4.5" height="4.5" fill="#d82a2a"/>
<rect x="966.5" y="562.2" width="7" height="6.5" fill="none" stroke="#f0f0f0" stroke-width="1"/><rect x="966" y="560.5" width="2" height="2" fill="#f0f0f0"/>
<text x="984.3" y="564.3" font-family="Liberation Sans" font-size="6" fill="#f4f6f8">10:03 PM</text>
<text x="983.5" y="572.5" font-family="Liberation Sans" font-size="6" fill="#f4f6f8">8/29/2021</text>
<rect x="1016" y="555" width="8" height="21" fill="#58606a" opacity="0.55"/>
<rect x="1016" y="555" width="0.7" height="21" fill="#a0a8b4" opacity="0.8"/>
</svg></div>
</body></html>
